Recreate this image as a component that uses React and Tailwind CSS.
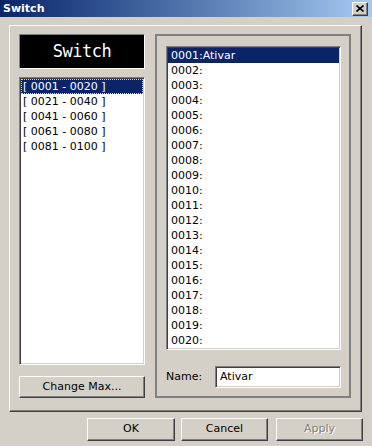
import React from "react";

const raised =
  "border border-t-white border-l-white border-r-[#404040] border-b-[#404040] shadow-[inset_-1px_-1px_0_#808080] bg-[#d4d0c8]";
const sunken =
  "border border-t-[#808080] border-l-[#808080] border-r-white border-b-white shadow-[inset_1px_1px_0_#404040,inset_-1px_-1px_0_#d4d0c8] p-[1px] bg-white";

const ranges = ["[ 0001 - 0020 ]", "[ 0021 - 0040 ]", "[ 0041 - 0060 ]", "[ 0061 - 0080 ]", "[ 0081 - 0100 ]"];

const switches = Array.from({ length: 20 }, (_, i) => {
  const n = String(i + 1).padStart(4, "0");
  return i === 0 ? `${n}:Ativar` : `${n}:`;
});

export default function App() {
  return (
    <div className="w-[372px] h-[446px] bg-[#d4d0c8] overflow-hidden flex flex-col font-['DejaVu_Sans',sans-serif] text-[11px] text-black">
      {/* Barra de título */}
      <div className="h-[17px] flex items-center justify-between pl-[3px] pr-[4px] bg-gradient-to-r from-[#0a246a] to-[#a6caf0]">
        <span className="text-white font-bold leading-none">Switch</span>
        <div className={`${raised} w-[16px] h-[14px] flex items-center justify-center`}>
          <svg width="8" height="7" viewBox="0 0 8 7">
            <path d="M0.5 0.5 L7.5 6.5 M7.5 0.5 L0.5 6.5" stroke="#000" strokeWidth="1.6" />
          </svg>
        </div>
      </div>

      {/* Panel principal */}
      <div className="mt-[8px] ml-[9px] w-[353px] h-[387px] border border-t-white border-l-white border-r-[#404040] border-b-[#404040] shadow-[inset_-1px_-1px_0_#808080] pl-[9px] pt-[8px] flex gap-[10px]">
        {/* Columna izquierda */}
        <div className="w-[126px] flex flex-col">
          <div className="h-[35px] bg-black border border-t-[#808080] border-l-[#808080] border-r-white border-b-white flex items-center justify-center text-white font-['DejaVu_Sans_Mono',monospace] text-[17px] tracking-[-0.5px]">
            Switch
          </div>
          <div className={`${sunken} mt-[8px] h-[288px]`}>
            {ranges.map((r, i) => (
              <div
                key={r}
                className={
                  i === 0
                    ? "h-[15px] leading-[13px] pl-[1px] bg-[#0a246a] text-white border border-dotted border-[#e8d27a] whitespace-pre"
                    : "h-[15px] leading-[15px] pl-[2px] whitespace-pre"
                }
              >
                {r}
              </div>
            ))}
          </div>
          <button className={`${raised} mt-[11px] h-[22px] w-full text-[11px]`}>Change Max...</button>
        </div>

        {/* Grupo derecho */}
        <div className="w-[196px] h-[364px] border-2 border-[#808080] pl-[9px] pt-[10px] pr-[8px]">
          <div className={`${sunken} h-[304px]`}>
            {switches.map((s, i) => (
              <div
                key={s}
                className={
                  i === 0
                    ? "h-[15px] leading-[15px] pl-[3px] bg-[#0a246a] text-white"
                    : "h-[15px] leading-[15px] pl-[3px]"
                }
              >
                {s}
              </div>
            ))}
          </div>
          <div className="mt-[16px] flex items-center">
            <span className="w-[49px]">Name:</span>
            <div className={`${sunken} w-[126px] h-[22px] pl-[4px] flex items-center`}>Ativar</div>
          </div>
        </div>
      </div>

      {/* Botones */}
      <div className="mt-[6px] pl-[87px] flex">
        <button className={`${raised} w-[88px] h-[23px] text-[11px]`}>OK</button>
        <button className={`${raised} ml-[6px] w-[87px] h-[23px] text-[11px]`}>Cancel</button>
        <button className={`${raised} ml-[8px] w-[87px] h-[23px] text-[11px] text-[#808080] [text-shadow:1px_1px_0_#fff]`}>
          Apply
        </button>
      </div>
    </div>
  );
}
